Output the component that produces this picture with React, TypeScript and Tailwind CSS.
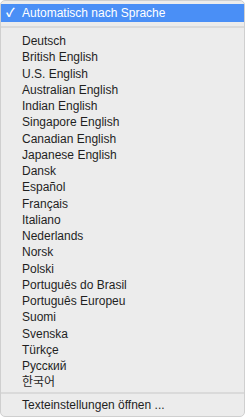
const languages = [
  "Deutsch",
  "British English",
  "U.S. English",
  "Australian English",
  "Indian English",
  "Singapore English",
  "Canadian English",
  "Japanese English",
  "Dansk",
  "Español",
  "Français",
  "Italiano",
  "Nederlands",
  "Norsk",
  "Polski",
  "Português do Brasil",
  "Português Europeu",
  "Suomi",
  "Svenska",
  "Türkçe",
  "Русский",
  "한국어",
]

export default function App() {
  return (
    <div
      className="w-[246px] h-[417px] bg-white overflow-hidden"
      style={{ fontFamily: '"Liberation Sans", "Noto Sans CJK KR", sans-serif' }}
    >
      <div className="w-[245px] h-[417px] bg-[#ececec] border border-[#cfcfcf] rounded-[5px] pt-[3px] text-[12px] text-[#1f1f1f]">
        {/* Selected */}
        <div className="flex h-[18px] items-center bg-[#4a8ff6] text-white">
          <span className="w-[21px] pl-[5px] text-[12px] font-bold">✓</span>
          <span>Automatisch nach Sprache</span>
        </div>

        <div className="mt-[4px] mb-[5px] h-[2px] bg-[#dadada]" />

        <div>
          {languages.map((lang) => (
            <div key={lang} className="flex h-[16.25px] items-center pl-[21px]">
              {lang}
            </div>
          ))}
        </div>

        <div className="mt-[1.5px] mb-[2.5px] h-[2px] bg-[#dadada]" />

        <div className="flex h-[16px] items-center pl-[21px]">Texteinstellungen öffnen ...</div>
      </div>
    </div>
  )
}
